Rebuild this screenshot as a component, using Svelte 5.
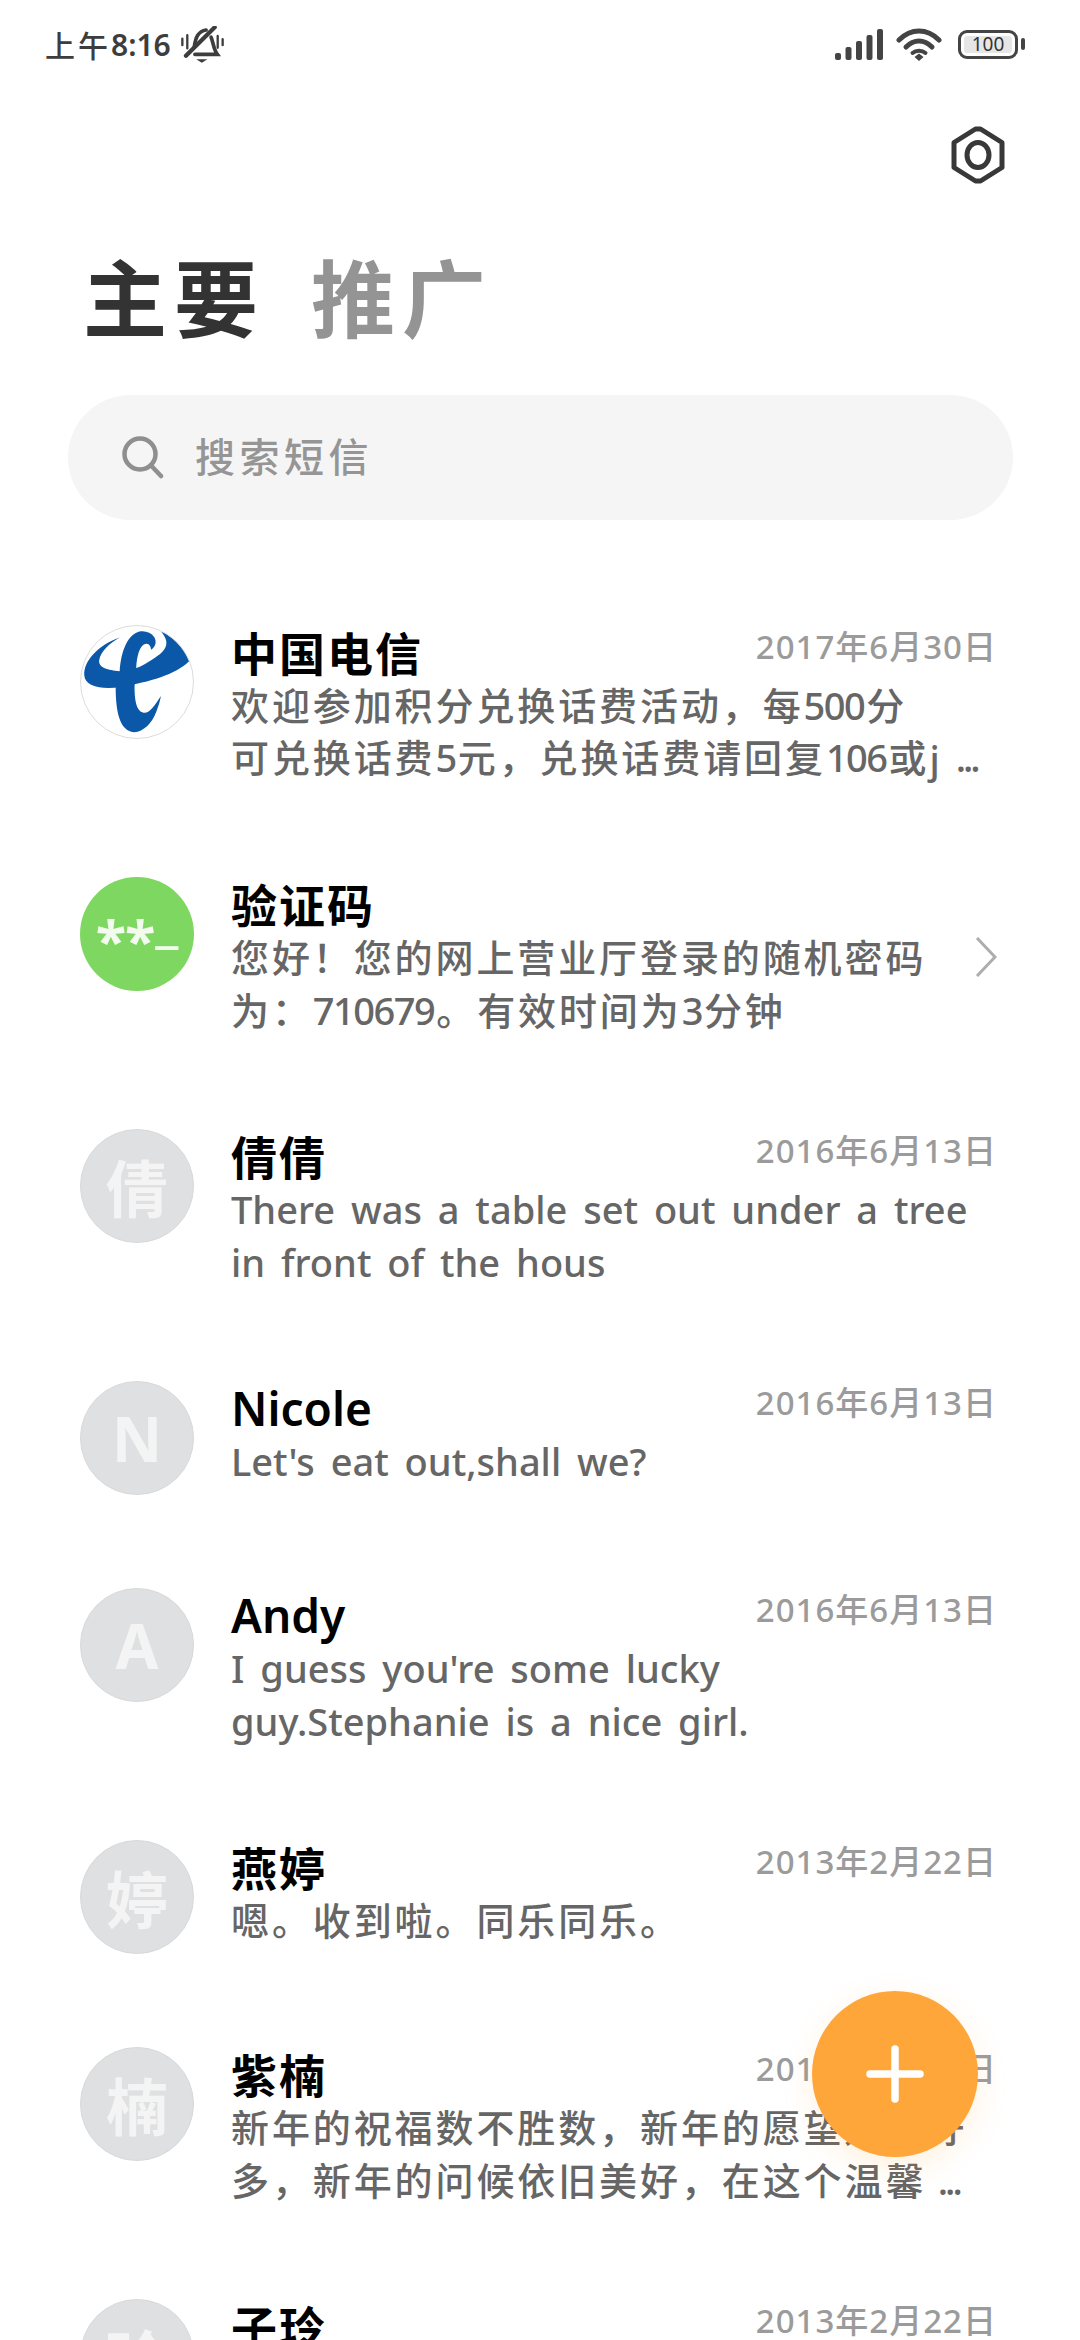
<script>
  const rows = [
    { name: '中国电信', date: '2017年6月30日', logo: 'telecom', lines: ['欢迎参加积分兑换话费活动，每500分', '可兑换话费5元，兑换话费请回复106或j ...'] },
    { name: '验证码', logo: 'code', chevron: true, lines: ['您好！您的网上营业厅登录的随机密码', '为：710679。有效时间为3分钟'] },
    { name: '倩倩', date: '2016年6月13日', mark: '倩', lines: ['There was a table set out under a tree', 'in front of the hous'] },
    { name: 'Nicole', date: '2016年6月13日', mark: 'N', lines: ["Let's eat out,shall we?"] },
    { name: 'Andy', date: '2016年6月13日', mark: 'A', lines: ["I guess you're some lucky", 'guy.Stephanie is a nice girl.'] },
    { name: '燕婷', date: '2013年2月22日', mark: '婷', lines: ['嗯。收到啦。同乐同乐。'] },
    { name: '紫楠', date: '2013年2月22日', mark: '楠', lines: ['新年的祝福数不胜数，新年的愿望好多好', '多，新年的问候依旧美好，在这个温馨 ...'] },
    { name: '子玲', date: '2013年2月22日', mark: '玲', lines: ['新年快乐'] }
  ];

  function parts(s) {
    return s.split(/(\.\.\.|\d+|[A-Za-z](?:[A-Za-z ,'?]|\.(?!\.))*)/).filter(Boolean).map((t) => ({
      t,
      c: t === '...' ? 'dots' : /^\d/.test(t) ? 'num' : /^[A-Za-z]/.test(t) ? 'lat' : 'cjk'
    }));
  }
</script>

<div class="page">
  <div class="status">
    <div class="time"><span class="cjk">上午</span><span>8:16</span>
      <svg class="bell" viewBox="480 28 130 112" fill="none" stroke="#3d3d3d" stroke-linecap="round">
        <path d="M495 118 L582 32" stroke-width="13" />
        <path d="M520 92 C524 62 532 44 556 40" stroke-width="11" />
        <path d="M571 62 C578 78 578 98 590 114 L522 114" stroke-width="11" />
        <path d="M526 129 H560 L543 139 Z" fill="#3d3d3d" stroke="none" />
        <path d="M484 66 V86 M499 56 V96 M591 58 V94 M606 68 V86" stroke-width="7" />
      </svg>
    </div>
    <div class="sys">
      <svg class="signal" viewBox="0 0 48 31" fill="#444">
        <rect x="0" y="24" width="6" height="7" rx="2" />
        <rect x="10.5" y="18" width="6" height="13" rx="2" />
        <rect x="21" y="12" width="6" height="19" rx="2" />
        <rect x="31.5" y="6" width="6" height="25" rx="2" />
        <rect x="42" y="0" width="6" height="31" rx="2" />
      </svg>
      <svg class="wifi" viewBox="0 0 46 33" fill="none" stroke="#444" stroke-width="5" stroke-linecap="round">
        <path d="M3 12 C15 0 31 0 43 12" />
        <path d="M10 19 C18 11 28 11 36 19" />
        <path d="M16.5 25 C20 22 26 22 29.5 25" stroke-width="4" />
        <path d="M18.5 29 L23 25.5 L27.5 29 L23 33 Z" fill="#444" stroke="none" />
      </svg>
      <div class="battery"><div class="cell">100</div></div>
      <div class="nub"></div>
    </div>
  </div>

  <div class="tools">
    <svg class="gear" viewBox="0 0 58 58" fill="none" stroke="#383838" stroke-width="5" stroke-linejoin="round">
      <path d="M26.5 3 H31.5 L53 16.5 V41.5 L31.5 55 H26.5 L5 41.5 V16.5 Z" />
      <ellipse cx="29" cy="29" rx="11" ry="12.5" />
    </svg>
  </div>

  <div class="tabs">
    <span class="tab on">主要</span>
    <span class="tab">推广</span>
  </div>

  <div class="search">
    <svg class="glass" viewBox="0 0 42 44" fill="none" stroke="#8f8f8f" stroke-width="4.5" stroke-linecap="round">
      <circle cx="18" cy="18" r="15.5" />
      <path d="M29.5 30 L39 40" />
    </svg>
    <span class="hint">搜索短信</span>
  </div>

  <div class="list">
    {#each rows as r}
      <div class="row">
        {#if r.logo === 'telecom'}
          <div class="avatar white">
            <svg viewBox="120 75 345 345">
              <clipPath id="disc"><circle cx="292" cy="247" r="170" /></clipPath>
              <g fill="#0b57a8" clip-path="url(#disc)">
                <path d="M240 113 C175 135 130 185 133 228 C135 262 190 272 245 262 C330 248 410 225 450 185 L450 165 C430 135 405 110 365 95 C392 125 385 150 350 172 C325 188 310 200 290 205 L240 215 C205 212 175 205 178 182 C182 155 210 130 240 113 Z" />
                <path d="M300 95 C265 105 245 150 240 215 L228 262 C228 320 235 372 262 392 C295 415 335 380 350 340 C358 320 362 305 365 290 C345 320 330 345 310 340 C290 335 285 300 285 262 L290 205 C292 170 300 135 320 132 C328 130 335 140 335 150 C350 140 352 125 345 112 C335 98 318 92 300 95 Z" />
              </g>
            </svg>
          </div>
        {:else if r.logo === 'code'}
          <div class="avatar green"><span class="stars">**</span><span class="blank">_</span></div>
        {:else}
          <div class="avatar">{r.mark}</div>
        {/if}
        <div class="text">
          <div class="head">
            <div class="name">{#each parts(r.name) as p}<span class={p.c}>{p.t}</span>{/each}</div>
            {#if r.date}<div class="date">{r.date}</div>{/if}
          </div>
          {#each r.lines as line, i}
            <div class="line">
              <div class="copy">{#each parts(line) as p}<span class={p.c}>{p.t}</span>{/each}</div>
              {#if r.chevron && i === 0}
                <svg class="chev" viewBox="0 0 22 40" fill="none" stroke="#adadad" stroke-width="3"><path d="M2 1 L20 20 L2 39" /></svg>
              {/if}
            </div>
          {/each}
        </div>
      </div>
    {/each}
  </div>

  <button class="fab" aria-label="add">
    <svg viewBox="0 0 58 58" fill="none" stroke="#fff" stroke-width="7.5" stroke-linecap="round"><path d="M29 4 V54 M4 29 H54" /></svg>
  </button>
</div>

<style>
  :global(body) { margin: 0; background: #fff; }
  .page {
    position: relative;
    width: 1080px;
    height: 2340px;
    overflow: hidden;
    background: #fff;
    font-family: "Noto Sans", "Noto Sans CJK SC", sans-serif;
  }
  .status {
    height: 88px;
    display: flex;
    align-items: center;
    justify-content: space-between;
    padding: 0 55px 0 45px;
    box-sizing: border-box;
  }
  .time {
    display: flex;
    align-items: center;
    font-family: "Noto Sans", "Noto Sans CJK SC", sans-serif;
    font-size: 30px;
    font-weight: 600;
    color: #3d3d3d;
  }
  .time .cjk { font-family: "Noto Sans CJK SC", sans-serif; font-weight: 500; letter-spacing: 3px; }
  .bell { width: 43px; height: 37px; margin-left: 10px; }
  .sys { display: flex; align-items: center; }
  .signal { width: 48px; height: 31px; }
  .wifi { width: 46px; height: 33px; margin-left: 13px; }
  .battery {
    width: 60px;
    height: 29px;
    margin-left: 16px;
    padding: 3px;
    border: 3px solid #444;
    border-radius: 9px;
    box-sizing: border-box;
  }
  .cell {
    height: 100%;
    background: #e6e6e6;
    border-radius: 3px;
    color: #333;
    font-size: 19px;
    line-height: 17px;
    text-align: center;
  }
  .nub { width: 4px; height: 12px; margin-left: 3px; background: #444; border-radius: 2px; }

  .tools { display: flex; justify-content: flex-end; padding: 38px 73px 0 0; }
  .gear { width: 58px; height: 58px; display: block; }

  .tabs {
    display: flex;
    gap: 46px;
    margin: 61px 0 0 83px;
    font-family: "Noto Sans CJK SC", sans-serif;
    font-size: 84px;
    line-height: 100px;
    font-weight: 700;
    letter-spacing: 7px;
    color: #949494;
  }
  .tab.on { color: #333; }

  .search {
    display: flex;
    align-items: center;
    gap: 31px;
    height: 125px;
    margin: 50px 67px 0 68px;
    padding-left: 54px;
    border-radius: 63px;
    background: #f5f5f5;
    font-family: "Noto Sans CJK SC", sans-serif;
    font-size: 40px;
    font-weight: 500;
    letter-spacing: 4.5px;
    color: #959595;
  }
  .glass { width: 42px; height: 44px; }
  .hint { margin-top: -5px; }

  .list { margin-top: 105px; }
  .row {
    display: flex;
    gap: 37px;
    padding: 0 87px 93px 80px;
  }
  .avatar {
    flex: none;
    display: flex;
    align-items: center;
    justify-content: center;
    width: 114px;
    height: 114px;
    border-radius: 50%;
    border: 1px solid #d8d9da;
    box-sizing: border-box;
    background: #dfe0e1;
    color: #f4f4f4;
    font-family: "Noto Sans", "Noto Sans CJK SC", sans-serif;
    font-size: 62px;
    font-weight: 700;
  }
  .avatar.white { background: #fff; border-color: #dcdcdc; overflow: hidden; }
  .avatar.white svg { width: 114px; height: 114px; flex: none; }
  .avatar.green {
    background: #7ed760;
    border: none;
    color: #f2fbee;
    font-size: 56px;
    line-height: 1;
    align-items: baseline;
    padding-top: 34px;
    height: 114px;
  }
  .stars { letter-spacing: -1px; }
  .blank { margin-left: 1px; position: relative; top: -20px; }
  .text { flex: 1; min-width: 0; }
  .head {
    display: flex;
    justify-content: space-between;
    align-items: flex-start;
    height: 53px;
    line-height: 53px;
  }
  .name { font-size: 46px; font-weight: 700; color: #000; white-space: nowrap; }
  .name .cjk { font-family: "Noto Sans CJK SC", sans-serif; letter-spacing: 2px; vertical-align: 2px; }
  .name .lat { font-weight: 600; vertical-align: -1px; }
  .date {
    font-family: "Noto Sans", "Noto Sans CJK SC", sans-serif;
    font-size: 33px;
    line-height: 44px;
    font-weight: 500;
    letter-spacing: 1px;
    margin-right: -4px;
    color: #9b9b9b;
    white-space: nowrap;
  }
  .line {
    display: flex;
    justify-content: space-between;
    align-items: center;
    height: 53px;
    line-height: 53px;
    font-size: 38px;
    font-weight: 500;
    color: #666;
    white-space: pre;
  }
  .copy .cjk { font-family: "Noto Sans CJK SC", sans-serif; letter-spacing: 2.9px; }
  .copy .num { letter-spacing: -1.5px; margin-right: 2px; }
  .copy .lat { word-spacing: 6px; letter-spacing: 0; vertical-align: -2px; }
  .copy .dots { letter-spacing: -3px; margin-left: 0; }
  .chev { width: 22px; height: 40px; margin-right: -4px; flex: none; }

  .fab {
    position: absolute;
    left: 812px;
    top: 1991px;
    width: 166px;
    height: 166px;
    padding: 0;
    border: none;
    border-radius: 50%;
    background: #ffa63b;
    box-shadow: 0 10px 30px rgba(255, 166, 59, 0.16);
    display: flex;
    align-items: center;
    justify-content: center;
  }
  .fab svg { width: 58px; height: 58px; }
</style>
